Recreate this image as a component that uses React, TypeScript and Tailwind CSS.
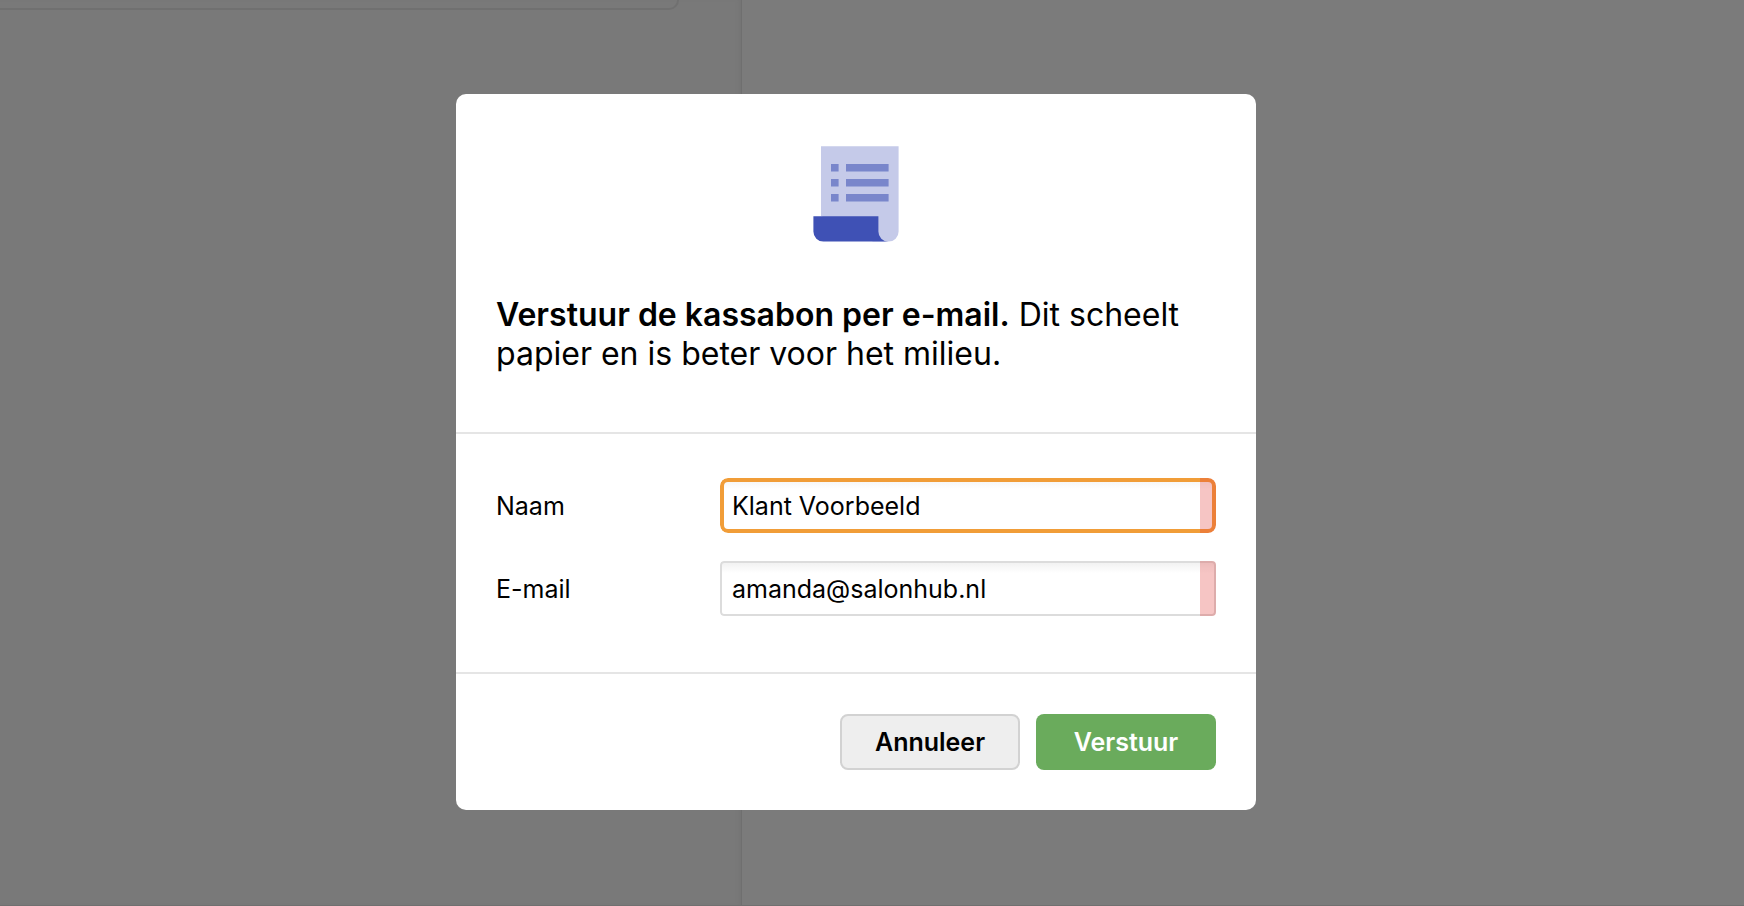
import React, { useState } from "react";

const ReceiptIcon = () => (
  <svg
    width="86"
    height="96"
    viewBox="0 0 86 96"
    fill="none"
    aria-hidden="true"
  >
    <path d="M8 0.3H85.6V85.5A10 10 0 0 1 75.5 95.6H60L8 70Z" fill="#c5cae9" />
    <path
      d="M0.4 70.3H65.4V85.5A10 10 0 0 0 75.4 95.6H10.5A10 10 0 0 1 0.4 85.5Z"
      fill="#3f51b5"
    />
    <path
      d="M18 18h7.6v7.6H18zM33 18h42.6v7.6H33zM18 33h7.6v7.6H18zM33 33h42.6v7.6H33zM18 48h7.6v7.6H18zM33 48h42.6v7.6H33z"
      fill="#7986cb"
    />
  </svg>
);

type FieldProps = {
  id: string;
  label: string;
  type: string;
  value: string;
  onChange: (value: string) => void;
  active?: boolean;
};

const Field = ({ id, label, type, value, onChange, active }: FieldProps) => (
  <div className="flex items-center">
    <label htmlFor={id} className="w-56 shrink-0 text-[25px] leading-[32px]">
      {label}
    </label>
    <div
      className={
        active
          ? "relative flex-1 overflow-hidden rounded-lg"
          : "relative flex-1 overflow-hidden rounded"
      }
    >
      <input
        id={id}
        type={type}
        required
        value={value}
        onChange={(e) => onChange(e.target.value)}
        className={
          active
            ? "block h-[55px] w-full rounded-lg border-4 border-[#f19d38] bg-white bg-linear-to-b from-[#f7f7f7] to-white to-15% pr-6 pl-2 text-[25px] outline-none"
            : "block h-[55px] w-full rounded border-2 border-[#dcdcdc] bg-white bg-linear-to-b from-[#f2f2f2] to-white to-20% pr-6 pl-[10px] text-[25px] outline-none"
        }
      />
      {/* required marker */}
      <span className="pointer-events-none absolute inset-y-0 right-0 w-4 bg-[#e0403a]/30" />
    </div>
  </div>
);

const SendReceiptModal = () => {
  const [name, setName] = useState("Klant Voorbeeld");
  const [email, setEmail] = useState("amanda@salonhub.nl");

  return (
    <form
      role="dialog"
      aria-labelledby="receipt-title"
      onSubmit={(e) => e.preventDefault()}
      className="w-full max-w-[800px] rounded-[10px] bg-white"
    >
      <div className="border-b-2 border-[#e5e5e5] px-10 pt-[52px] pb-[59px]">
        <div className="flex justify-center">
          <ReceiptIcon />
        </div>
        <p id="receipt-title" className="mt-[53px] text-[32px] leading-[39px]">
          <strong className="font-semibold">
            Verstuur de kassabon per e-mail.
          </strong>{" "}
          Dit scheelt papier en is beter voor het milieu.
        </p>
      </div>
      <div className="flex flex-col gap-7 border-b-2 border-[#e5e5e5] px-10 pt-11 pb-14">
        <Field
          id="name"
          label="Naam"
          type="text"
          value={name}
          onChange={setName}
          active
        />
        <Field
          id="email"
          label="E-mail"
          type="email"
          value={email}
          onChange={setEmail}
        />
      </div>
      <div className="flex justify-end gap-4 p-10">
        <button
          type="button"
          className="h-14 w-[180px] rounded-lg border-2 border-[#d2d2d2] bg-[#eeeeee] pt-0.5 text-[25px] font-semibold"
        >
          Annuleer
        </button>
        <button
          type="submit"
          className="h-14 w-[180px] rounded-lg bg-[#6aab5c] pt-0.5 text-[25px] font-semibold text-white"
        >
          Verstuur
        </button>
      </div>
    </form>
  );
};

const App = () => {
  return (
    <div className="min-h-screen font-['Inter','Liberation_Sans',sans-serif] text-black">
      <div className="flex h-screen flex-col border-b border-[#e0e0e0] bg-[#f7f7f7]">
        <div className="flex flex-1">
          <div className="w-[742px] border-r border-[#dfdfdf] bg-[#f2f2f2] pr-[62px] shadow-[inset_-4px_0_4px_-2px_#e9e9e9]">
            <div className="h-[10px] rounded-br-[10px] border-r-2 border-b-2 border-[#e0e0e0]" />
          </div>
        </div>
      </div>
      <div className="fixed inset-0 flex items-start justify-center overflow-auto bg-black/50 pt-[94px] pr-8">
        <SendReceiptModal />
      </div>
    </div>
  );
};

export default App;
